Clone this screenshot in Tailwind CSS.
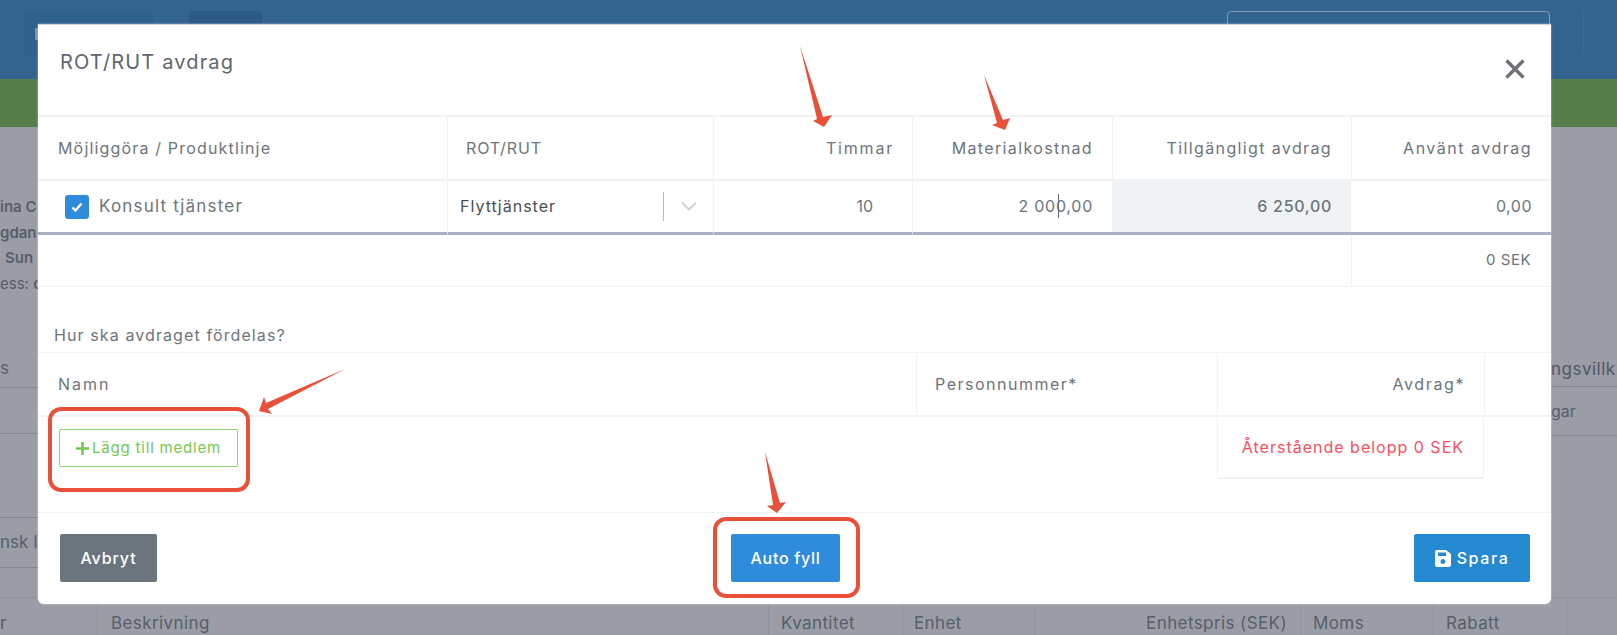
<!DOCTYPE html>
<html lang="en">
  <head>
    <meta charset="UTF-8" />
    <title>ROT/RUT avdrag</title>
    <script src="https://cdn.jsdelivr.net/npm/@tailwindcss/browser@4"></script>
  </head>
  <body class="font-[Inter,sans-serif]">
    <div class="relative h-[635px] w-[1617px] overflow-hidden bg-[#9a9da5]">

      <!-- Page behind the modal -->
      <header class="flex h-[79px] items-start bg-[#33638f] pt-[11px]">
        <div class="ml-[24px] flex h-[46px] w-[130px] items-center rounded bg-[#30608c] pl-[11px]">
          <span class="h-[12px] w-[3px] bg-[#7d8fa3]"></span>
        </div>
        <div class="ml-[35px] h-[46px] w-[73px] rounded bg-[#2c5a87]"></div>
        <div class="ml-[965px] h-[46px] w-[323px] rounded border border-[#8599b0]"></div>
        <div class="ml-[33px] h-[42px] w-px bg-[#3b6a95]"></div>
      </header>
      <div class="h-[48px] bg-[#567e4a]"></div>

      <div class="flex h-[470px] justify-between text-[17px] text-[#565e6c]">
        <div class="w-[38px] overflow-hidden whitespace-nowrap text-[15px]">
          <div class="h-[260px] pt-[67px] font-semibold leading-[25.5px]">
            <p>ina C</p>
            <p>gdan</p>
            <p class="pl-[5px]">Sun</p>
            <p class="font-normal">ess: <b class="font-semibold">d</b></p>
          </div>
        </div>
        <div class="w-[66px] overflow-hidden whitespace-nowrap pt-[230px]">
          <div class="flex h-[30px] items-end border-b border-[#83868e] pb-[4px] tracking-[0.5px] text-[#4f5664]">ngsvillk</div>
          <div class="flex h-[49px] items-center border-b border-[#83868e] text-[16px]">gar</div>
        </div>
      </div>

      <div class="grid h-[38px] grid-cols-[97px_671px_134px_132px_266px_133px_133px_51px] border-t border-[#8f929a] text-[17px] tracking-[0.4px] text-[#565e6c]">
        <div class="flex items-center pt-[13px]">r</div>
        <div class="flex items-center border-l border-[#8f929a] pl-[13px] pt-[13px]">Beskrivning</div>
        <div class="flex items-center border-l border-[#8f929a] pl-[12px] pt-[13px]">Kvantitet</div>
        <div class="flex items-center border-l border-[#8f929a] pl-[11px] pt-[13px]">Enhet</div>
        <div class="flex items-center justify-end border-l border-[#8f929a] pr-[13px] pt-[13px]">Enhetspris (SEK)</div>
        <div class="flex items-center border-l border-[#8f929a] pl-[12px] pt-[13px]">Moms</div>
        <div class="flex items-center border-l border-[#8f929a] pl-[12px] pt-[13px]">Rabatt</div>
        <div class="border-l border-[#8f929a]"></div>
      </div>

      <!-- Left rows of the page behind -->
      <div class="absolute left-0 top-[387px] w-[38px] overflow-hidden whitespace-nowrap text-[17px] text-[#565e6c]">
        <div class="h-[46px] border-t border-[#83868e]"></div>
        <div class="h-[84px] border-t border-[#83868e]"></div>
        <div class="flex h-[50px] items-center border-t border-[#83868e]">nsk I</div>
        <div class="h-px bg-[#83868e]"></div>
      </div>
      <div class="absolute left-0 top-[360px] text-[17px] leading-none text-[#565e6c]">s</div>

      <!-- Modal -->
      <div class="absolute left-[38px] top-[24px] flex h-[580px] w-[1513px] flex-col rounded-b-md border-t border-[#cfd4da] bg-white text-[#6c757d] shadow-[0_0_2px_rgba(255,255,255,0.7)]">
        <div class="flex h-[90px] items-start justify-between pl-[22px] pr-[26px]">
          <h2 class="mt-[22px] text-[20px] leading-[30px] tracking-[1.15px] text-[#5e6670]">ROT/RUT avdrag</h2>
          <svg class="mt-[34px]" width="20" height="20" viewBox="0 0 20 20" fill="none" stroke="#6f7275" stroke-width="3.4"><path d="M1.5 1.5l17 17M18.5 1.5l-17 17" /></svg>
        </div>

        <!-- Deduction table -->
        <div class="grid grid-cols-[409px_266px_199px_200px_239px_200px] text-[16px]">
          <div class="flex h-[66px] items-center border-t-2 border-b-2 border-[#f1f2f3] pl-[20px] tracking-[1.17px]">Möjliggöra / Produktlinje</div>
          <div class="flex h-[66px] items-center border-t-2 border-b-2 border-l border-[#f1f2f3] pl-[18px] tracking-[0.85px]">ROT/RUT</div>
          <div class="flex h-[66px] items-center justify-end border-t-2 border-b-2 border-l border-[#f1f2f3] pr-[18px] tracking-[1.8px]">Timmar</div>
          <div class="flex h-[66px] items-center justify-end border-t-2 border-b-2 border-l border-[#f1f2f3] pr-[19px] tracking-[1.37px]">Materialkostnad</div>
          <div class="flex h-[66px] items-center justify-end border-t-2 border-b-2 border-l border-[#f1f2f3] pr-[19px] tracking-[1.37px]">Tillgängligt avdrag</div>
          <div class="flex h-[66px] items-center justify-end border-t-2 border-b-2 border-l border-[#f1f2f3] pr-[19px] tracking-[1.5px]">Använt avdrag</div>

          <div class="flex h-[54px] items-center border-b-[3px] border-[#a9b3c1] pl-[27px]">
            <span class="flex h-[24px] w-[24px] items-center justify-center rounded-[3px] bg-[#2f8bdc]">
              <svg width="12" height="10" viewBox="0 0 12 10" fill="none" stroke="white" stroke-width="2.4"><path d="M1.5 5.500l3 3 6-7" /></svg>
            </span>
            <span class="ml-[10px] text-[17px] tracking-[1.2px] text-[#6c757d]">Konsult tjänster</span>
          </div>
          <div class="flex h-[54px] items-center border-b-[3px] border-l border-b-[#a9b3c1] border-l-[#f1f2f3] pl-[12px] pb-[1px] text-[#4a4f55]">
            <span class="w-[203px] tracking-[1px]">Flyttjänster</span>
            <span class="h-[29px] w-px bg-[#b5b8bc]"></span>
            <svg class="ml-[17px]" width="16" height="10" viewBox="0 0 16 10" fill="none" stroke="#cfd1d3" stroke-width="2"><path d="M1 1.500l7 7 7-7" /></svg>
          </div>
          <div class="flex h-[54px] items-center justify-end border-b-[3px] border-l border-b-[#a9b3c1] border-l-[#f1f2f3] pr-[39px] pb-[1px]">10</div>
          <div class="relative flex h-[54px] items-center justify-end border-b-[3px] border-l border-b-[#a9b3c1] border-l-[#f1f2f3] pr-[19px] pb-[1px] tracking-[0.75px]">
            2 000,00
            <span class="absolute left-[145px] top-[13px] h-[24px] w-px bg-[#5f6b7a]"></span>
          </div>
          <div class="flex h-[54px] items-center justify-end border-b-[3px] border-b-[#a9b3c1] bg-[#f0f3f6] pr-[19px] pb-[1px] font-medium tracking-[0.7px]">6 250,00</div>
          <div class="flex h-[54px] items-center justify-end border-b-[3px] border-b-[#a9b3c1] pr-[19px] pb-[1px] tracking-[0.5px]">0,00</div>

          <div class="col-span-5 h-[52px] border-b border-[#f1f2f3]"></div>
          <div class="flex h-[52px] items-center justify-end border-b border-l border-[#f1f2f3] pr-[20px] text-[15px] tracking-[0.5px]">0 SEK</div>
        </div>

        <p class="mt-[37px] pl-[16px] text-[16px] leading-[22px] tracking-[1.1px]">Hur ska avdraget fördelas?</p>

        <!-- Members table -->
        <div class="mt-[6px] grid grid-cols-[878px_301px_267px_67px] text-[16px]">
          <div class="flex h-[65px] items-center border-t border-b-2 border-[#f1f2f3] pl-[20px] tracking-[2px]">Namn</div>
          <div class="flex h-[65px] items-center border-t border-b-2 border-l border-[#f1f2f3] pl-[18px] tracking-[1.5px]">Personnummer*</div>
          <div class="flex h-[65px] items-center justify-end border-t border-b-2 border-l border-[#f1f2f3] pr-[19px] tracking-[1.6px]">Avdrag*</div>
          <div class="h-[65px] border-t border-b-2 border-l border-[#f1f2f3]"></div>

          <div class="col-span-2 h-[95px] pl-[21px] pt-[12px]">
            <button class="flex h-[38px] w-[179px] items-center justify-center rounded-[2px] border border-[#8fd16f] text-[15px] tracking-[0.8px] text-[#72c94f]">
              <svg class="mr-[3px]" width="13" height="13" viewBox="0 0 13 13" fill="none" stroke="#72c94f" stroke-width="2.6"><path d="M6.500 0v13M0 6.500h13" /></svg>
              Lägg till medlem
            </button>
          </div>
          <div class="flex h-[62px] items-center justify-end border-x border-b-2 border-[#f1f2f3] pr-[19px] tracking-[1px] text-[#ff4d5e]">Återstående belopp 0 SEK</div>
          <div></div>
        </div>

        <!-- Footer -->
        <div class="flex flex-1 items-start justify-between border-t border-[#f1f2f3] pl-[22px] pr-[21px] pt-[21px] font-medium text-[16px] text-white">
          <button class="h-[48px] w-[97px] rounded-[2px] bg-[#6c757d] tracking-[0.9px]">Avbryt</button>
          <button class="h-[48px] w-[109px] rounded-[2px] bg-[#2f8bdc] tracking-[0.7px]">Auto fyll</button>
          <button class="flex h-[48px] w-[116px] items-center justify-center rounded-[2px] bg-[#2489d1] tracking-[1.6px]">
            <svg class="mr-[6px]" width="16" height="17" viewBox="0 0 16 17" fill="white"><path d="M2 0h9l5 4v11a2 2 0 0 1-2 2H2a2 2 0 0 1-2-2V2a2 2 0 0 1 2-2zM3 2.500v3.500h8V2.500zM8 9a2.500 2.500 0 1 0 0 5 2.500 2.500 0 0 0 0-5z" fill-rule="evenodd" /></svg>
            Spara
          </button>
        </div>
      </div>

      <!-- Red annotations drawn on top of the screenshot -->
      <svg class="absolute left-0 top-0" width="1617" height="635" viewBox="0 0 1617 635" fill="#e8503a">
        <polygon points="800,46 823,117 832,115 824,127 813,121 817,119" />
        <polygon points="984,75 1003,120 1010,118 1005,130 992,125 997,123" />
        <polygon points="345,369 266,403 264,397 259,411 272,414 268,409" />
        <polygon points="765,452 780,503 786,502 777,513 767,506 773,505" />
        <rect x="50" y="409" width="198" height="81" rx="11" fill="none" stroke="#e8503a" stroke-width="4" />
        <rect x="715" y="519" width="143" height="77" rx="11" fill="none" stroke="#e8503a" stroke-width="4" />
      </svg>
    </div>
  </body>
</html>
